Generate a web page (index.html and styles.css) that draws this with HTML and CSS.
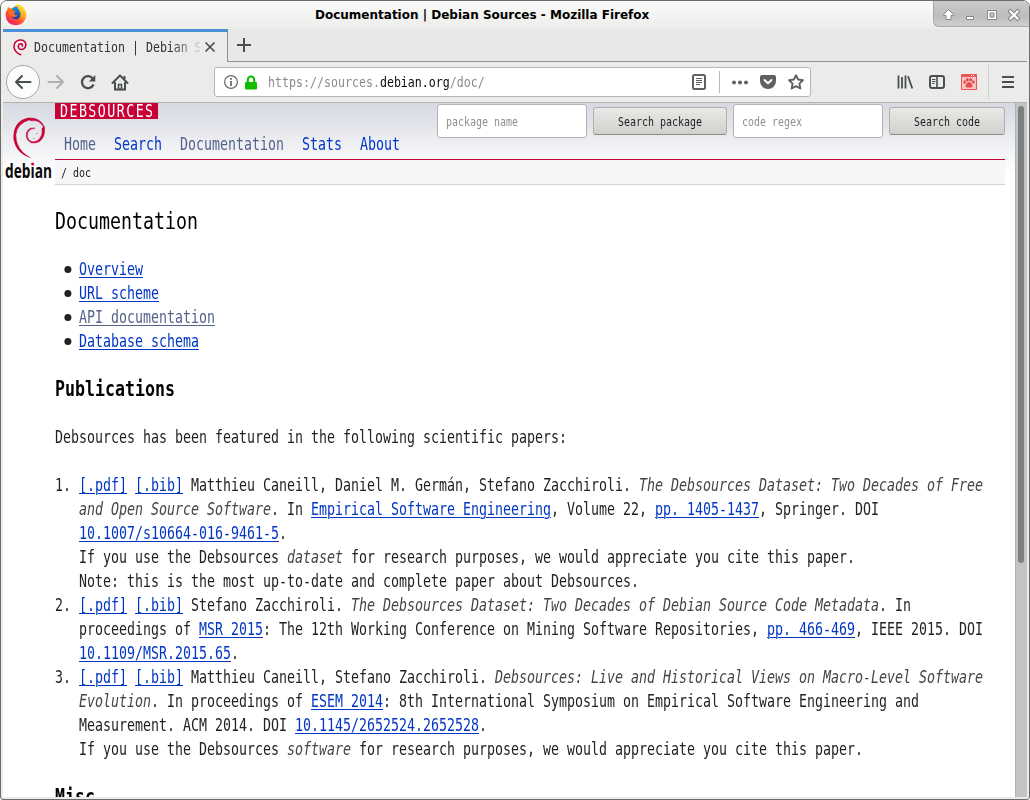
FILE: index.html
```html
<!DOCTYPE html>
<html lang="en">
<head>
<meta charset="utf-8">
<title>Documentation | Debian Sources</title>
<link rel="stylesheet" href="styles.css">
</head>
<body>
<div class="window">
  <header class="titlebar">
    <svg class="fox" width="22" height="22" viewBox="0 0 22 22">
      <defs>
        <linearGradient id="fx" x1="0.85" y1="0" x2="0.15" y2="1"><stop offset="0" stop-color="#fff044"/><stop offset=".35" stop-color="#ffae1c"/><stop offset=".62" stop-color="#ff4f2c"/><stop offset="1" stop-color="#e5127c"/></linearGradient>
        <linearGradient id="gl" x1="0" y1="0" x2="0" y2="1"><stop offset="0" stop-color="#1596e8"/><stop offset="1" stop-color="#203a9c"/></linearGradient>
      </defs>
      <path d="M3 2.500Q4 4 5.500 4.300Q7 3.700 8 4Q9.500 1.800 12 .6Q14.500 .5 17 2Q21.500 5.500 21.300 11.500Q20.500 20.500 11 21.300Q1.500 20.800 .7 11.800Q.5 7 2.400 5.500Z" fill="url(#fx)"/>
      <path d="M7 4.500Q10 1.800 13 3.200Q12 4.500 14 6Q16 8.500 15.300 12Q14 15.500 10.500 15.200Q7 14.700 6.500 11.500L10 11.500L9 9L10 7.500L7.600 6.500Z" fill="url(#gl)"/>
      <path d="M3 5.500Q5 4.500 7 6L10.500 7Q10 8.500 8.300 9Q8 11 10.200 11.200L12.500 11Q11.500 13.500 8.500 13Q5 12.500 3.500 9Z" fill="#ff6a22"/>
    </svg>
    <div class="wintitle">Documentation | Debian Sources - Mozilla Firefox</div>
    <div class="controls">
      <svg width="96" height="26" viewBox="0 0 96 26" fill="#fff" stroke="#858585" stroke-width="1">
        <path d="M14.500 9.500L19.500 14.500V15.500H17V19.500H12V15.500H9.500V14.500Z"/>
        <path d="M32.500 16.500h7v3h-7z"/>
        <path d="M53.500 10.500h9v9h-9z"/><path d="M56 13h4v4h-4z" fill="#c4c4c4"/>
        <path d="M76.500 11.500l7 7m0-7l-7 7" stroke-width="4.200" stroke-linecap="square"/>
        <path d="M76.500 11.500l7 7m0-7l-7 7" stroke="#fff" stroke-width="2.200" stroke-linecap="square"/>
      </svg>
    </div>
  </header>
  <div class="tabs">
    <div class="tab">
      <svg width="14" height="17" viewBox="0 0 14 17" fill="none" stroke="#c70036" stroke-linecap="round"><path d="M7.500 15.700Q1.500 13 1 8Q1 2 6.500 1Q12 .6 12.800 5Q13 9.500 9 10.500Q5.500 10.500 5.300 7.500Q5.600 4.800 8 4.800Q9.800 5 9.300 7" stroke-width="1.500"/></svg>
      <div class="tabtext"><span class="mono">Documentation | Debian S</span></div>
      <svg class="tabclose" width="12" height="12" viewBox="0 0 12 12" fill="none" stroke="#4a4f51" stroke-width="1.700"><path d="M1.500 1.500l9 9m0-9l-9 9"/></svg>
    </div>
    <div class="newtab"><svg width="14" height="14" viewBox="0 0 14 14" stroke="#4a4f51" stroke-width="2"><path d="M7 0v14M0 7h14"/></svg></div>
  </div>
  <div class="toolbar">
    <div class="back"><svg width="18" height="16" viewBox="0 0 18 16" fill="none" stroke="#4a4f51" stroke-width="2" stroke-linecap="round" stroke-linejoin="round"><path d="M8 2L2 8l6 6M2 8h14.500"/></svg></div>
    <svg class="fwd" width="18" height="16" viewBox="0 0 18 16" fill="none" stroke="#b0b1b0" stroke-width="2" stroke-linecap="round" stroke-linejoin="round"><path d="M10 2l6 6-6 6M16 8H1.500"/></svg>
    <svg class="reload" width="16" height="16" viewBox="0 0 16 16" fill="none" stroke="#4a4f51" stroke-width="2.300"><path d="M13 4.800A6 6 0 1 0 13.500 10.500"/><path d="M15.300 1v6.500H8.800z" fill="#4a4f51" stroke="none"/></svg>
    <svg class="home" width="18" height="17" viewBox="0 0 18 17" fill="none" stroke="#4a4f51" stroke-width="2"><path d="M1.500 9L9 1.500 16.500 9" stroke-linecap="round" stroke-linejoin="round"/><path d="M4 8v7.500h10V8M13.500 2v3"/><path d="M7.500 15.500V10.500h3v5z" stroke-width="1.600"/></svg>
    <div class="urlbar">
      <svg width="14" height="14" viewBox="0 0 14 14" fill="none" stroke="#6a6a6a"><circle cx="7" cy="7" r="6.400" stroke-width="1.200"/><path d="M7 6v5M7 3v1.800" stroke-width="1.800"/></svg>
      <svg class="lock" width="12" height="15" viewBox="0 0 12 15"><rect y="7" width="12" height="7.500" rx="1" fill="#12bc00"/><path d="M2.800 8V5a3.200 3.500 0 0 1 6.400 0V8" fill="none" stroke="#12bc00" stroke-width="2.200"/></svg>
      <div class="address"><span class="mono">https://sources.<b>debian.org</b>/doc/</span></div>
      <svg class="reader" width="14" height="16" viewBox="0 0 14 16" fill="none" stroke="#606162"><rect x="1" y="1" width="12" height="14" rx="1.500" stroke-width="2"/><path d="M4 4.500h6M4 6.500h6M4 8.500h6M4 10.500h4" /></svg>
      <i class="sep"></i>
      <svg class="dots" width="17" height="5" viewBox="0 0 17 5" fill="#606162"><circle cx="2" cy="2.500" r="2"/><circle cx="8" cy="2.500" r="2"/><circle cx="14" cy="2.500" r="2"/></svg>
      <svg class="pocket" width="16" height="14" viewBox="0 0 16 14"><path d="M2 0h12q2 0 2 2v4a8 8 0 0 1-16 0V2q0-2 2-2z" fill="#606162"/><path d="M4.500 5L8 8.300 11.500 5" fill="none" stroke="#fff" stroke-width="2" stroke-linecap="round" stroke-linejoin="round"/></svg>
      <svg class="star" width="16" height="16" viewBox="0 0 16 16" fill="none" stroke="#606162" stroke-width="1.900" stroke-linejoin="round"><path d="M8 1.200l2.100 4.300 4.800.7-3.500 3.400.9 4.900L8 12.200l-4.300 2.300.9-4.900L1.100 6.200l4.800-.7z"/></svg>
    </div>
    <div class="tools">
      <svg width="16" height="14" viewBox="0 0 16 14" fill="none" stroke="#4a4f51" stroke-width="1.800"><path d="M1.500 .5v13M5 2v11.500M8.500 .5v13M11 1.200l4.300 12.300"/></svg>
      <svg width="16" height="14" viewBox="0 0 16 14" fill="none" stroke="#4a4f51"><rect x="1" y="1" width="14" height="12" rx="2" stroke-width="2"/><path d="M8 1v12" stroke-width="1.600"/><path d="M3 4.500h3.500M3 6.500h3.500M3 8.500h2.500"/></svg>
      <svg width="16" height="16" viewBox="0 0 16 16"><path d="M.5 .5h15v15H.5z" fill="#f6c6c6" stroke="#ea5454"/><path d="M1 1h14v2H1z" fill="#ea5454"/><path d="M10 1.500h1m1 0h1" stroke="#fff"/><g fill="#ea4c4c"><ellipse cx="3.700" cy="8" rx="1.400" ry="1.700"/><ellipse cx="6.300" cy="5.700" rx="1.500" ry="1.700"/><ellipse cx="9.700" cy="5.700" rx="1.500" ry="1.700"/><ellipse cx="12.300" cy="8" rx="1.400" ry="1.700"/><path d="M8 8q2 0 3.500 3.500.5 2.500-3.500 2-4 .5-3.500-2Q6 8 8 8z"/></g></svg>
    </div>
    <i class="toolsep"></i>
    <svg class="menu" width="12" height="12" viewBox="0 0 12 12" stroke="#4a4f51" stroke-width="2"><path d="M0 1h12M0 6h12M0 11h12"/></svg>
  </div>
  <div class="viewport">
    <main class="page">
      <div class="logo">
        <svg width="50" height="74" viewBox="0 0 50 74">
          <path d="M27 50.500Q13 46 10.700 32Q10 14 25 11Q37 10 41.500 20Q42.500 30 36.500 34.500Q28 38.500 24 32Q21.500 25 27 21.500Q29.500 20.500 32 21.200Q27 21.500 25 25Q23 30 26.500 33.500Q31 36.500 36 32.500Q40 28 39 21.500L40.500 20Q36 12.500 29 13.800L26 13Q14 16.500 12.800 28Q13 43 27 50.500Z" fill="#c70036" stroke="#c70036" stroke-width=".5"/>
          <g fill="#c70036"><circle cx="31" cy="31.500" r=".5"/><circle cx="34" cy="26.500" r=".5"/><circle cx="29.600" cy="57" r="1.500"/></g>
          <text class="brand" x="2" y="70.500" textLength="47" lengthAdjust="spacingAndGlyphs">deb&#305;an</text>
        </svg>
      </div>
      <div class="content">
        <div class="top">
          <div class="left">
            <div class="site"><span class="mono">DEBSOURCES</span></div>
            <nav class="mono"><a class="seen">Home</a><a>Search</a><a class="seen">Documentation</a><a>Stats</a><a>About</a></nav>
          </div>
          <div class="forms">
            <div class="field"><span class="mono">package name</span></div>
            <div class="button wide"><span class="mono">Search package</span></div>
            <div class="field"><span class="mono">code regex</span></div>
            <div class="button"><span class="mono">Search code</span></div>
          </div>
        </div>
        <div class="crumbs"><span class="mono">/ doc</span></div>
        <article class="mono doc">
          <h1>Documentation</h1>
          <ul>
            <li><a>Overview</a></li>
            <li><a>URL scheme</a></li>
            <li><a class="seen">API documentation</a></li>
            <li><a>Database schema</a></li>
          </ul>
          <h2>Publications</h2>
          <p>Debsources has been featured in the following scientific papers:</p>
          <ol>
            <li><span class="num">1.</span><a>[.pdf]</a> <a>[.bib]</a> Matthieu Caneill, Daniel M. Germán, Stefano Zacchiroli. <em>The Debsources Dataset: Two Decades of Free and Open Source Software</em>. In <a>Empirical Software Engineering</a>, Volume 22, <a>pp. 1405-1437</a>, Springer. DOI <a>10.1007/s10664-016-9461-5</a>.<br>If you use the Debsources <em>dataset</em> for research purposes, we would appreciate you cite this paper.<br>Note: this is the most up-to-date and complete paper about Debsources.</li>
            <li><span class="num">2.</span><a>[.pdf]</a> <a>[.bib]</a> Stefano Zacchiroli. <em>The Debsources Dataset: Two Decades of Debian Source Code Metadata</em>. In proceedings of <a>MSR 2015</a>: The 12th Working Conference on Mining Software Repositories, <a>pp. 466-469</a>, IEEE 2015. DOI <a>10.1109/MSR.2015.65</a>.</li>
            <li><span class="num">3.</span><a>[.pdf]</a> <a>[.bib]</a> Matthieu Caneill, Stefano Zacchiroli. <em>Debsources: Live and Historical Views on Macro-Level Software Evolution</em>. In proceedings of <a>ESEM 2014</a>: 8th International Symposium on Empirical Software Engineering and Measurement. ACM 2014. DOI <a>10.1145/2652524.2652528</a>.<br>If you use the Debsources <em>software</em> for research purposes, we would appreciate you cite this paper.</li>
          </ol>
          <h2>Misc</h2>
        </article>
      </div>
    </main>
    <div class="scroll"><i class="thumb"></i></div>
  </div>
</div>
</body>
</html>
```

FILE: styles.css
```css
* { box-sizing: border-box; }
body { margin: 0; background: #fff; overflow: hidden; --s: .7817; }
svg { display: block; flex: none; }
.mono {
  display: block;
  font-family: "DejaVu Sans Mono", monospace;
  white-space: nowrap;
  transform: scaleX(var(--s));
  transform-origin: 0 50%;
}
.window {
  width: 1030px; height: 800px;
  border: 1px solid #6d6a6a;
  border-radius: 7px 7px 3px 3px;
  padding: 0 2px 2px;
  background: #ebebe9;
  overflow: hidden;
  display: flex; flex-direction: column;
}
.titlebar {
  height: 28px; flex: none; margin: 0 -2px;
  display: flex; align-items: flex-start; justify-content: space-between;
  background: linear-gradient(#fafaf9, #ececea);
}
.fox { margin: 3px 0 0 4px; }
.wintitle {
  flex: 1; padding-left: 288px;
  font: bold 12px/28px "DejaVu Sans", sans-serif; color: #000; white-space: nowrap;
}
.controls {
  width: 96px; height: 26px;
  border: 1px solid #a9a9a8; border-width: 0 0 1px 1px;
  border-radius: 0 0 0 6px;
  background: linear-gradient(#cbcbca, #bdbdbc 60%, #cfcfce);
}
.controls svg { margin-top: -1px; }
.tabs { height: 33px; flex: none; display: flex; background: #e8e8e6; }
.tab {
  width: 225px; display: flex; align-items: center;
  border-top: 3px solid #4a90d9; border-right: 1px solid #919291;
  background: #ebebe9; padding-left: 10px;
}
.tabtext {
  width: 166px; margin-left: 7px; line-height: 28px; color: #303435;
  -webkit-mask-image: linear-gradient(90deg, #000 138px, transparent 170px);
  mask-image: linear-gradient(90deg, #000 138px, transparent 170px);
}
.tabtext .mono { width: 212px; font-size: 14.875px; }
.address .mono { font-size: 14.875px; }
.tabclose { margin-left: 4px; }
.newtab { flex: 1; border-bottom: 1px solid #919291; padding: 9px 0 0 9px; }
.toolbar { height: 41px; flex: none; display: flex; align-items: center; border-bottom: 1px solid #b4b4b1; }
.back {
  width: 34px; height: 34px; margin-left: 3px; border: 1px solid #a6a6a4; border-radius: 50%;
  background: #fcfcfc; display: flex; align-items: center; justify-content: center;
}
.fwd { margin-left: 7px; }
.reload { margin-left: 15px; }
.home { margin-left: 15px; }
.urlbar {
  width: 597px; height: 30px; margin-left: 85px;
  border: 1px solid #b6b6b3; border-radius: 3px; background: #fff;
  display: flex; align-items: center; padding-left: 9px;
}
.lock { margin-left: 7px; }
.address { width: 424px; margin-left: 11px; color: #8b8b8b; line-height: 28px; }
.address b { font-weight: normal; color: #0c0c0d; }
.sep { width: 1px; height: 22px; background: #b8b8b8; margin: 0 12px 0 13px; }
.pocket { margin-left: 11px; }
.star { margin-left: 12px; }
.tools { display: flex; align-items: center; gap: 16px; margin-left: 86px; }
.toolsep { width: 1px; height: 34px; background: #cfcfcd; margin: 0 13px 0 11px; }
.viewport { flex: 1; min-height: 0; display: flex; background: #fff; }
.page {
  width: 1012px; padding-right: 10px; display: flex; overflow: hidden;
  background: linear-gradient(#d7d9e2, #fff 70px);
}
.logo { width: 52px; flex: none; padding-top: 4px; }
.brand { font: bold 19.500px "Open Sans", sans-serif; fill: #0a0a0a; }
.content { width: 950px; flex: none; }
.top { display: flex; justify-content: space-between; height: 57px; border-bottom: 1px solid #c70036; }
.left { width: 360px; }
.site { width: 103px; height: 16px; background: #c70036; color: #fff; padding-left: 5px; line-height: 16px; }
.site .mono { font-size: 17px; letter-spacing: 1.860px; }
nav.mono { width: 450px; display: flex; gap: 23.030px; margin: 13px 0 0 9px; font-size: 17px; line-height: 24px; }
a { color: #0035c7; white-space: nowrap; }
a.seen { color: #54638c; }
.forms { display: flex; gap: 6px; padding-top: 1px; }
.field { width: 150px; height: 34px; border: 1px solid #b4b4b1; border-radius: 3px; background: #fff; color: #8e8e8e; line-height: 33px; padding-left: 8px; }
.button {
  width: 116px; height: 28px; margin-top: 3px; padding-left: 24px; line-height: 27px; color: #1d2021;
  border: 1px solid #b0b0ad; border-bottom-color: #8c8c89; border-radius: 3px;
  background: linear-gradient(#e9e9e7, #d0d0cd);
}
.button.wide { width: 134px; }
.field .mono, .button .mono, .crumbs .mono { font-size: 12.750px; }
.crumbs { height: 25px; background: #f5f6f7; border-bottom: 1px solid #d2d3d7; padding-left: 6px; line-height: 25px; color: #222; }
.doc { width: 1216px; font-size: 17px; line-height: 24px; color: #222; white-space: normal; padding-top: 24px; }
.doc h1 { margin: 0; font-size: 23.375px; font-weight: normal; line-height: 25px; height: 24px; color: #000; }
.doc ul, .doc ol { margin: 24px 0; padding: 0 0 0 30.700px; list-style: none; }
.doc h2 { margin: 24px 0; font-size: 21.250px; line-height: 24px; color: #000; }
.doc p { margin: 24px 0; }
.doc ul li { display: flex; align-items: center; }
.doc ul li::before { content: ""; width: 9px; height: 7px; border-radius: 50%; background: #222; margin: 0 10px 0 -19px; }
.doc li a { text-decoration: underline; text-decoration-thickness: 1px; text-underline-offset: 2px; }
.doc em { color: #444; }
.num { display: inline-block; width: 30.700px; margin-left: -30.700px; }
.scroll { width: 12px; background: #c2c4c3; border-left: 1px solid #b0b2b1; padding: 3px 0 0 2px; }
.thumb { display: block; width: 6px; height: 457px; border-radius: 3px; background: #7b7f80; }
```
